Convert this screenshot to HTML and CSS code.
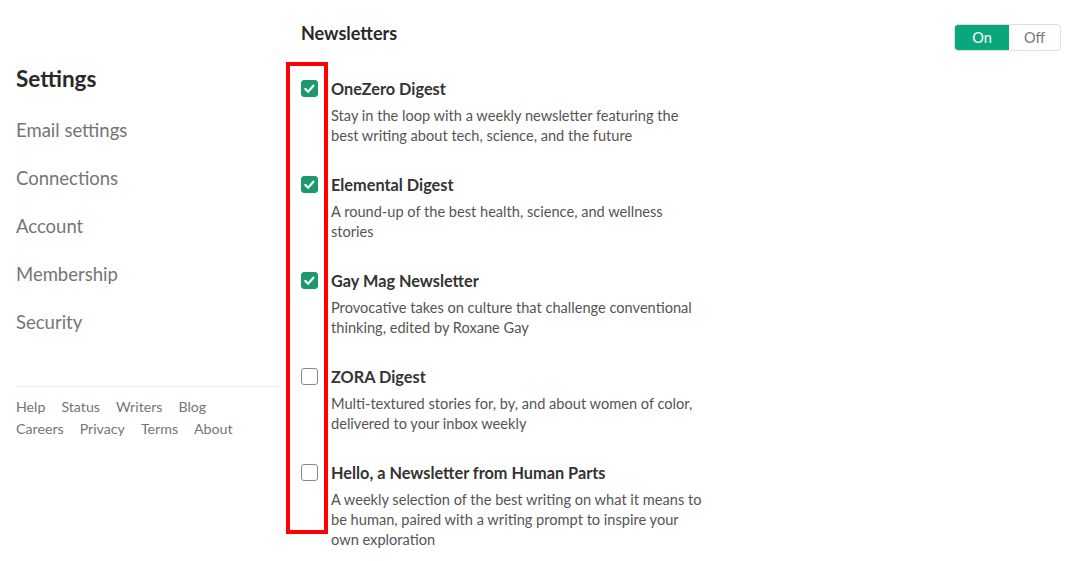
FILE: index.html
```html
<!DOCTYPE html>
<html>
<head>
<meta charset="utf-8">
<link rel="stylesheet" href="styles.css">
</head>
<body>
<div class="page">
  <aside class="sidebar">
    <h1 class="side-title">Settings</h1>
    <nav class="side-nav">
      <a class="side-link">Email settings</a>
      <a class="side-link">Connections</a>
      <a class="side-link">Account</a>
      <a class="side-link">Membership</a>
      <a class="side-link">Security</a>
    </nav>
    <div class="footer">
      <div class="footer-row"><a>Help</a><a>Status</a><a>Writers</a><a>Blog</a></div>
      <div class="footer-row"><a>Careers</a><a>Privacy</a><a>Terms</a><a>About</a></div>
    </div>
  </aside>
  <main class="main">
    <div class="header">
      <h2 class="main-title">Newsletters</h2>
      <div class="toggle">
        <span class="toggle-on">On</span>
        <span class="toggle-off">Off</span>
      </div>
    </div>
    <div class="list">
      <div class="highlight"></div>
      <div class="item">
        <span class="check checked"><svg viewBox="0 0 17 17" width="17" height="17"><path d="M4.4 8.9l2.7 2.8 5.3-6" fill="none" stroke="#fff" stroke-width="2.2" stroke-linecap="round" stroke-linejoin="round"/></svg></span>
        <div class="item-text">
          <div class="item-title">OneZero Digest</div>
          <div class="item-desc">Stay in the loop with a weekly newsletter featuring the<br>best writing about tech, science, and the future</div>
        </div>
      </div>
      <div class="item">
        <span class="check checked"><svg viewBox="0 0 17 17" width="17" height="17"><path d="M4.4 8.9l2.7 2.8 5.3-6" fill="none" stroke="#fff" stroke-width="2.2" stroke-linecap="round" stroke-linejoin="round"/></svg></span>
        <div class="item-text">
          <div class="item-title">Elemental Digest</div>
          <div class="item-desc">A round-up of the best health, science, and wellness<br>stories</div>
        </div>
      </div>
      <div class="item">
        <span class="check checked"><svg viewBox="0 0 17 17" width="17" height="17"><path d="M4.4 8.9l2.7 2.8 5.3-6" fill="none" stroke="#fff" stroke-width="2.2" stroke-linecap="round" stroke-linejoin="round"/></svg></span>
        <div class="item-text">
          <div class="item-title">Gay Mag Newsletter</div>
          <div class="item-desc">Provocative takes on culture that challenge conventional<br>thinking, edited by Roxane Gay</div>
        </div>
      </div>
      <div class="item">
        <span class="check"></span>
        <div class="item-text">
          <div class="item-title">ZORA Digest</div>
          <div class="item-desc">Multi-textured stories for, by, and about women of color,<br>delivered to your inbox weekly</div>
        </div>
      </div>
      <div class="item">
        <span class="check"></span>
        <div class="item-text">
          <div class="item-title">Hello, a Newsletter from Human Parts</div>
          <div class="item-desc">A weekly selection of the best writing on what it means to<br>be human, paired with a writing prompt to inspire your<br>own exploration</div>
        </div>
      </div>
    </div>
  </main>
</div>
</body>
</html>
```
FILE: styles.css
```css
* { box-sizing: border-box; }
html, body { margin: 0; padding: 0; background: #fff; }
body {
  font-family: Lato, "Open Sans", "Liberation Sans", sans-serif;
  color: #292929;
}
a { text-decoration: none; color: inherit; }
.page {
  display: flex;
  width: 1092px;
  height: 561px;
  overflow: hidden;
}
.sidebar {
  width: 280px;
  padding-left: 16px;
  padding-top: 65px;
  flex-shrink: 0;
}
.side-title {
  margin: 0;
  font-size: 22.5px;
  line-height: 28px;
  font-weight: 700;
  color: #292929;
}
.side-nav {
  display: flex;
  flex-direction: column;
  margin-top: 13px;
}
.side-link {
  font-size: 18.5px;
  line-height: 48px;
  color: #757575;
}
.footer {
  margin-top: 40px;
  border-top: 1px solid #ececec;
  padding-top: 9px;
}
.footer-row {
  display: flex;
  gap: 16px;
  font-size: 14.2px;
  line-height: 22px;
  color: #757575;
}
.main {
  flex: 1;
  padding-left: 21px;
  padding-right: 31px;
  padding-top: 20px;
}
.header {
  display: flex;
  justify-content: space-between;
  align-items: flex-start;
  height: 26px;
}
.main-title {
  margin: 0;
  font-size: 18px;
  line-height: 26px;
  font-weight: 700;
  color: #292929;
}
.toggle {
  margin-top: 4px;
  display: flex;
  height: 27px;
  border: 1px solid #e0e0e0;
  border-radius: 4px;
  overflow: hidden;
  font-size: 14.5px;
}
.toggle-on {
  width: 54px;
  background: #0aa77c;
  color: #fff;
  display: flex;
  align-items: center;
  justify-content: center;
}
.toggle-off {
  width: 51px;
  color: #757575;
  display: flex;
  align-items: center;
  justify-content: center;
}
.list {
  position: relative;
  margin-top: 31px;
  display: flex;
  flex-direction: column;
  gap: 27px;
}
.highlight {
  position: absolute;
  left: -15px;
  top: -15px;
  width: 42px;
  height: 472px;
  border: 4px solid #ff0000;
  pointer-events: none;
}
.item {
  display: flex;
  align-items: flex-start;
}
.check {
  width: 17px;
  height: 17px;
  margin-top: 3px;
  margin-right: 13px;
  border: 1px solid #8a8a8a;
  border-radius: 3px;
  flex-shrink: 0;
  background: #fff;
  position: relative;
}
.check.checked {
  background: #1a9a6c;
  border-color: #1a9a6c;
}
.check svg {
  position: absolute;
  left: -1px;
  top: -1px;
}
.item-title {
  font-size: 16.3px;
  line-height: 24px;
  font-weight: 700;
  color: #333;
}
.item-desc {
  margin-top: 5px;
  font-size: 14.6px;
  line-height: 20px;
  color: #555;
}
```
